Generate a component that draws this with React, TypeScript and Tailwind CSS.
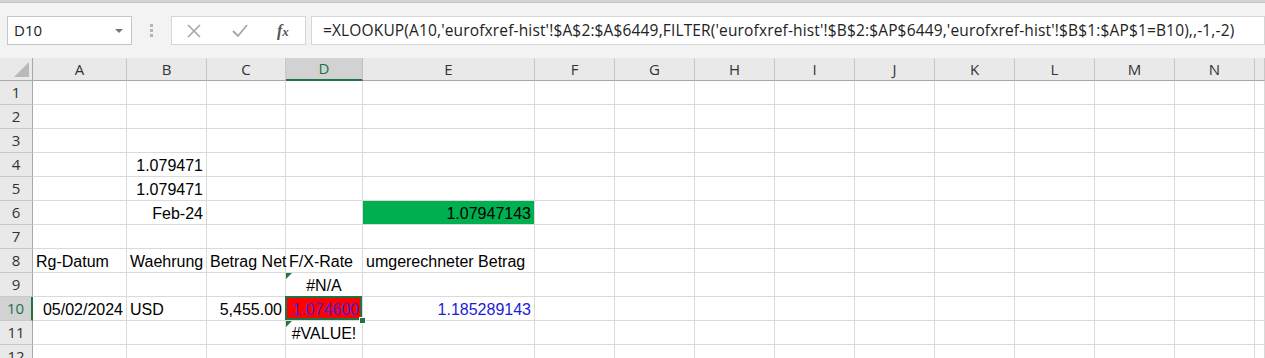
import React from 'react';

const cols = ['A', 'B', 'C', 'D', 'E', 'F', 'G', 'H', 'I', 'J', 'K', 'L', 'M', 'N', ''];

type Cell = { text: string; align: 'left' | 'right' | 'center'; bg?: string; color?: string };

const cells: Record<string, Cell> = {
  B4: { text: '1.079471', align: 'right' },
  B5: { text: '1.079471', align: 'right' },
  B6: { text: 'Feb-24', align: 'right' },
  E6: { text: '1.07947143', align: 'right', bg: 'bg-[#00b050]' },
  A8: { text: 'Rg-Datum', align: 'left' },
  B8: { text: 'Waehrung', align: 'left' },
  C8: { text: 'Betrag Net', align: 'left' },
  D8: { text: 'F/X-Rate', align: 'left' },
  E8: { text: 'umgerechneter Betrag', align: 'left' },
  D9: { text: '#N/A', align: 'center' },
  A10: { text: '05/02/2024', align: 'right' },
  B10: { text: 'USD', align: 'left' },
  C10: { text: '5,455.00', align: 'right' },
  D10: { text: '1.074600', align: 'right', bg: 'bg-[#ff0000]', color: 'text-[#4a22d4]' },
  E10: { text: '1.185289143', align: 'right', color: 'text-[#1c1cd6]' },
  D11: { text: '#VALUE!', align: 'center' },
};

const alignClass = {
  left: 'justify-start pl-[3px]',
  right: 'justify-end pr-[3px]',
  center: 'justify-center',
};

const formula =
  "=XLOOKUP(A10,'eurofxref-hist'!$A$2:$A$6449,FILTER('eurofxref-hist'!$B$2:$AP$6449,'eurofxref-hist'!$B$1:$AP$1=B10),,-1,-2)";

const FormulaBar = () => (
  <div className="flex items-center h-[29px] mt-[13px] mb-[13px] pl-[7px]">
    <div className="w-[125px] h-[29px] bg-white border border-[#c6c6c6] flex items-center justify-between pl-[6px] pr-[8px]">
      <span className="text-[15px] text-[#222] font-['Open_Sans',sans-serif]">D10</span>
      <span className="w-0 h-0 border-l-[4px] border-r-[4px] border-t-[4px] border-l-transparent border-r-transparent border-t-[#777]" />
    </div>
    <div className="w-[39px] flex flex-col items-center gap-[2px]">
      <span className="w-[3px] h-[3px] bg-[#b4b4b4]" />
      <span className="w-[3px] h-[3px] bg-[#b4b4b4]" />
      <span className="w-[3px] h-[3px] bg-[#b4b4b4]" />
    </div>
    <div className="w-[135px] h-[29px] bg-white border border-[#d6d6d6] flex items-center pl-[15px]">
      <svg width="14" height="14" viewBox="0 0 14 14" className="mr-[31px]">
        <path d="M1 1 L13 13 M13 1 L1 13" stroke="#a6a6a6" strokeWidth="1.6" />
      </svg>
      <svg width="16" height="13" viewBox="0 0 16 13" className="mr-[29px]">
        <path d="M1 7 L6 12 L15 1" stroke="#a6a6a6" strokeWidth="1.8" fill="none" />
      </svg>
      <span className="text-[16px] italic text-[#555] font-['Liberation_Serif',serif] font-bold leading-none">
        f<span className="text-[13px]">x</span>
      </span>
    </div>
    <div className="flex-1 h-[29px] ml-[5px] bg-white border border-[#d6d6d6] flex items-center pl-[11px] overflow-hidden whitespace-nowrap">
      <span className="text-[15.5px] text-[#222] font-['Open_Sans',sans-serif] tracking-[0.15px]">{formula}</span>
    </div>
  </div>
);

const App = () => {
  const rows = Array.from({ length: 12 }, (_, i) => i + 1);
  return (
    <div className="w-[1265px] h-[358px] overflow-hidden bg-[#f3f3f3]">
      <div className="h-[3px] bg-[#d4d4d4] border-b border-[#c4c4c4]" />
      <FormulaBar />
      <div className="grid grid-cols-[33px_94px_80px_79px_77px_172px_80px_80px_80px_80px_80px_80px_80px_80px_80px_1fr] grid-rows-[23px_repeat(12,24px)] bg-white">
        <div className="bg-[#e9e9e9] border-r border-b border-[#a8a8a8] flex items-end justify-end pr-[3px] pb-[3px]">
          <svg width="15" height="15" viewBox="0 0 15 15">
            <path d="M15 0 L15 15 L0 15 Z" fill="#b9b9b9" />
          </svg>
        </div>
        {cols.map((c, i) => (
          <div
            key={i}
            className={
              c === 'D'
                ? 'bg-[#d2d2d2] border-r border-[#c0c0c0] border-b-2 border-b-[#217346] flex items-center justify-center text-[15px] text-[#217346] font-["Open_Sans",sans-serif]'
                : 'bg-[#e9e9e9] border-r border-[#c8c8c8] border-b border-b-[#a8a8a8] flex items-center justify-center text-[15px] text-[#333] font-["Open_Sans",sans-serif]'
            }
          >
            {c}
          </div>
        ))}
        {rows.map((r) => (
          <React.Fragment key={r}>
            <div
              className={
                r === 10
                  ? 'bg-[#d2d2d2] border-r-2 border-r-[#217346] border-b border-b-[#c8c8c8] flex items-center justify-center text-[15px] text-[#217346] font-["Open_Sans",sans-serif]'
                  : 'bg-[#e9e9e9] border-r border-r-[#a8a8a8] border-b border-b-[#c8c8c8] flex items-center justify-center text-[15px] text-[#333] font-["Open_Sans",sans-serif]'
              }
            >
              {r}
            </div>
            {cols.map((c, i) => {
              const key = `${c}${r}`;
              const cell = c ? cells[key] : undefined;
              const isSel = key === 'D10';
              return (
                <div
                  key={i}
                  className={`relative border-r border-b border-[#dadada] flex items-end pb-[1px] whitespace-nowrap text-[16px] leading-[18px] font-['Liberation_Sans',Arial,sans-serif] ${cell?.color ?? 'text-black'} ${cell ? alignClass[cell.align] : ''} ${cell?.bg ?? ''}`}
                >
                  {cell && <span className="relative z-10">{cell.text}</span>}
                  {(key === 'D9' || key === 'D11') && (
                    <svg width="6" height="6" viewBox="0 0 6 6" className="absolute left-0 top-0 z-20">
                      <path d="M0 0 L6 0 L0 6 Z" fill="#1f7a3c" />
                    </svg>
                  )}
                  {isSel && (
                    <>
                      <div className="absolute -left-[1px] -top-[1px] right-0 bottom-0 border-2 border-[#217346] z-20 pointer-events-none" />
                      <div className="absolute -right-[4px] -bottom-[4px] w-[7px] h-[7px] bg-[#217346] border border-white z-30" />
                    </>
                  )}
                </div>
              );
            })}
          </React.Fragment>
        ))}
      </div>
    </div>
  );
};

export default App;
